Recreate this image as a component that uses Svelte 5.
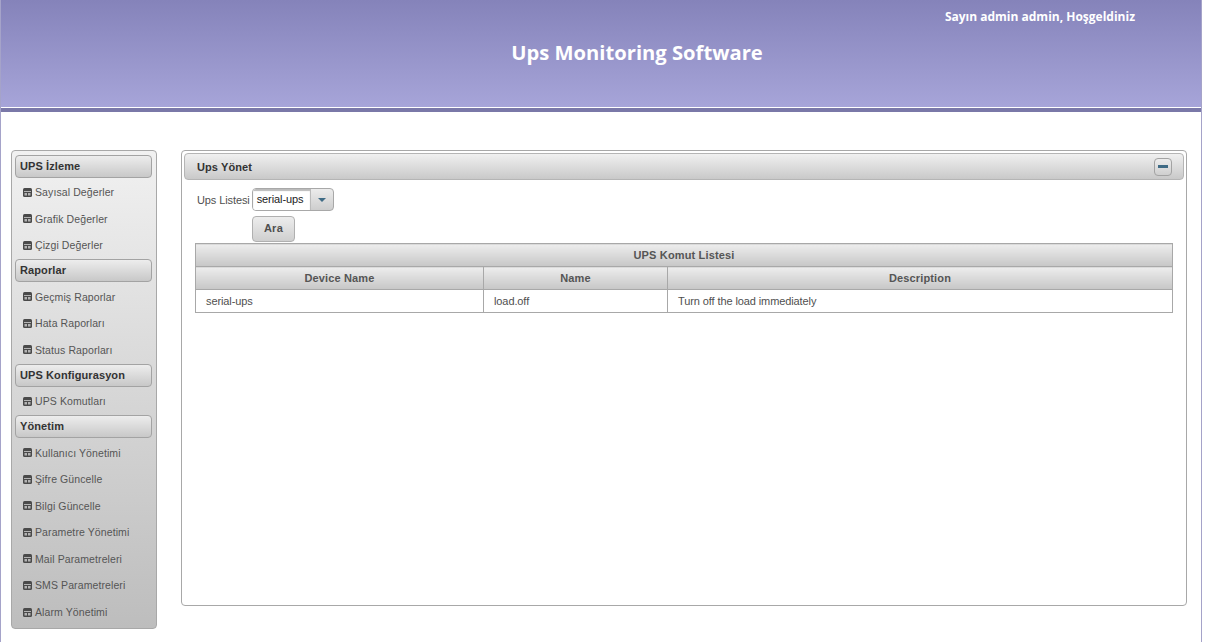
<script lang="ts">
  const menu = [
    { title: 'UPS İzleme', items: ['Sayısal Değerler', 'Grafik Değerler', 'Çizgi Değerler'] },
    { title: 'Raporlar', items: ['Geçmiş Raporlar', 'Hata Raporları', 'Status Raporları'] },
    { title: 'UPS Konfigurasyon', items: ['UPS Komutları'] },
    {
      title: 'Yönetim',
      items: [
        'Kullanıcı Yönetimi',
        'Şifre Güncelle',
        'Bilgi Güncelle',
        'Parametre Yönetimi',
        'Mail Parametreleri',
        'SMS Parametreleri',
        'Alarm Yönetimi'
      ]
    }
  ];

  const commands = [
    { device: 'serial-ups', name: 'load.off', description: 'Turn off the load immediately' }
  ];
</script>

<div class="page">
  <header class="top">
    <div class="welcome">Sayın admin admin, Hoşgeldiniz</div>
    <h1>Ups Monitoring Software</h1>
  </header>

  <div class="content">
    <aside class="sidebar">
      {#each menu as group}
        <div class="group-title">{group.title}</div>
        {#each group.items as item}
          <a class="item" href="#top">
            <svg class="icon" width="9" height="9" viewBox="0 0 9 9">
              <rect x="0" y="0" width="9" height="9" rx="1.5" fill="#4a4a4a" />
              <rect x="1" y="3" width="7" height="1" fill="#b4b4b4" />
              <rect x="1.5" y="5" width="2.5" height="2.5" fill="#b4b4b4" />
              <rect x="5" y="5" width="2.5" height="2.5" fill="#b4b4b4" />
            </svg>
            {item}
          </a>
        {/each}
      {/each}
    </aside>

    <main class="panel">
      <div class="panel-title">
        <span>Ups Yönet</span>
        <button class="collapse" type="button" aria-label="Daralt"><span></span></button>
      </div>

      <div class="panel-body">
        <div class="filter">
          <label for="ups">Ups Listesi</label>
          <div class="select" id="ups">
            <span class="select-value">serial-ups</span>
            <span class="select-arrow"><i></i></span>
          </div>
        </div>
        <button class="search" type="button">Ara</button>

        <table>
          <colgroup>
            <col class="c1" />
            <col class="c2" />
            <col />
          </colgroup>
          <thead>
            <tr><th colspan="3">UPS Komut Listesi</th></tr>
            <tr>
              <th>Device Name</th>
              <th>Name</th>
              <th>Description</th>
            </tr>
          </thead>
          <tbody>
            {#each commands as cmd}
              <tr>
                <td>{cmd.device}</td>
                <td>{cmd.name}</td>
                <td>{cmd.description}</td>
              </tr>
            {/each}
          </tbody>
        </table>
      </div>
    </main>
  </div>
</div>

<style>
  :global(body) {
    margin: 0;
    background: #fff;
  }

  .page {
    width: 1202px;
    height: 642px;
    box-sizing: border-box;
    border-left: 1px solid #a5a3c9;
    border-right: 1px solid #a5a3c9;
    font-family: "Liberation Sans", Arial, sans-serif;
    font-size: 11px;
    letter-spacing: -0.1px;
    color: #4f4f4f;
  }

  .top {
    height: 108px;
    background: linear-gradient(#8583ba, #a7a5d9);
    border-bottom: 4px solid #7a78a8;
    box-shadow: inset 0 -1px 0 #fff;
    color: #fff;
    font-family: "Open Sans", sans-serif;
    font-weight: bold;
    letter-spacing: 0;
    text-align: center;
  }

  .welcome {
    font-size: 12px;
    padding: 9px 66px 0 0;
    text-align: right;
    line-height: 15px;
  }

  h1 {
    margin: 0;
    padding: 16px 0 0 72px;
    font-size: 20.2px;
    line-height: 24px;
  }

  .content {
    display: flex;
    align-items: flex-start;
    padding: 38px 0 0 10px;
  }

  .sidebar {
    width: 146px;
    height: 479px;
    box-sizing: border-box;
    padding: 4px 4px 0 3px;
    margin-right: 24px;
    border: 1px solid #a8a8a8;
    border-radius: 4px;
    background: linear-gradient(#f1f1f1, #bdbdbd);
    flex: none;
  }

  .group-title {
    height: 23px;
    line-height: 21px;
    box-sizing: border-box;
    padding-left: 4px;
    margin-top: 1.7px;
    border: 1px solid #a3a3a3;
    border-radius: 4px;
    background: linear-gradient(#ededed, #c8c8c8);
    font-weight: bold;
    color: #333;
    letter-spacing: 0.1px;
  }

  .group-title:first-child {
    margin-top: 0;
  }

  .item {
    display: flex;
    align-items: center;
    gap: 3px;
    height: 26.6px;
    box-sizing: border-box;
    padding: 2px 0 0 8px;
    color: #555;
    text-decoration: none;
    font-size: 10.5px;
    letter-spacing: 0.1px;
  }

  .icon {
    flex: none;
  }

  .panel {
    width: 1006px;
    height: 456px;
    box-sizing: border-box;
    padding: 2px 2px 0;
    border: 1px solid #a8a8a8;
    border-radius: 4px;
    background: #fff;
    flex: none;
  }

  .panel-title {
    display: flex;
    align-items: center;
    justify-content: space-between;
    height: 27px;
    box-sizing: border-box;
    padding: 0 11px 0 12px;
    border: 1px solid #b5b5b5;
    border-radius: 4px;
    background: linear-gradient(#f0f0f0, #c9c9c9);
    font-weight: bold;
    color: #333;
    letter-spacing: 0.1px;
  }

  .collapse {
    width: 18px;
    height: 18px;
    padding: 0;
    display: flex;
    align-items: center;
    justify-content: center;
    border: 1px solid #a3a3a3;
    border-radius: 4px;
    background: linear-gradient(#ececec, #cfcfcf);
  }

  .collapse span {
    display: block;
    width: 10px;
    height: 3px;
    background: #3f6b85;
  }

  .panel-body {
    padding: 8px 10px 0 11px;
  }

  .filter {
    display: flex;
    align-items: center;
    gap: 2px;
    height: 23px;
    padding-left: 2px;
  }

  label {
    color: #4f4f4f;
  }

  .select {
    display: flex;
    width: 82px;
    height: 23px;
    box-sizing: border-box;
    border: 1px solid #a8a8a8;
    border-radius: 4px;
    background: linear-gradient(#ececec, #cdcdcd);
    overflow: hidden;
  }

  .select-value {
    width: 58px;
    padding-left: 4px;
    box-sizing: border-box;
    background: #fff;
    border-right: 1px solid #bbb;
    box-shadow: inset 0 2px 1px #bbb;
    line-height: 21px;
    color: #222;
  }

  .select-arrow {
    flex: 1;
    display: flex;
    align-items: center;
    justify-content: center;
  }

  .select-arrow i {
    border-left: 4px solid transparent;
    border-right: 4px solid transparent;
    border-top: 4px solid #3f6b85;
  }

  .search {
    display: block;
    width: 43px;
    height: 26px;
    margin: 5px 0 1px 57px;
    padding: 0 0 2px;
    border: 1px solid #b0b0b0;
    border-radius: 4px;
    background: linear-gradient(#ededed, #cfcfcf);
    font: bold 11px "Liberation Sans", Arial, sans-serif;
    letter-spacing: 0.3px;
    color: #4f4f4f;
  }

  table {
    width: 978px;
    table-layout: fixed;
    border-collapse: collapse;
  }

  .c1 {
    width: 288px;
  }

  .c2 {
    width: 184px;
  }

  th {
    height: 22px;
    padding: 0;
    border: 1px solid #a8a8a8;
    background: linear-gradient(#ededed, #c6c6c6);
    font-weight: bold;
    color: #555;
    letter-spacing: 0.15px;
    text-align: center;
  }

  td {
    height: 22px;
    padding: 0 10px;
    border: 1px solid #a8a8a8;
    color: #4f4f4f;
  }
</style>
